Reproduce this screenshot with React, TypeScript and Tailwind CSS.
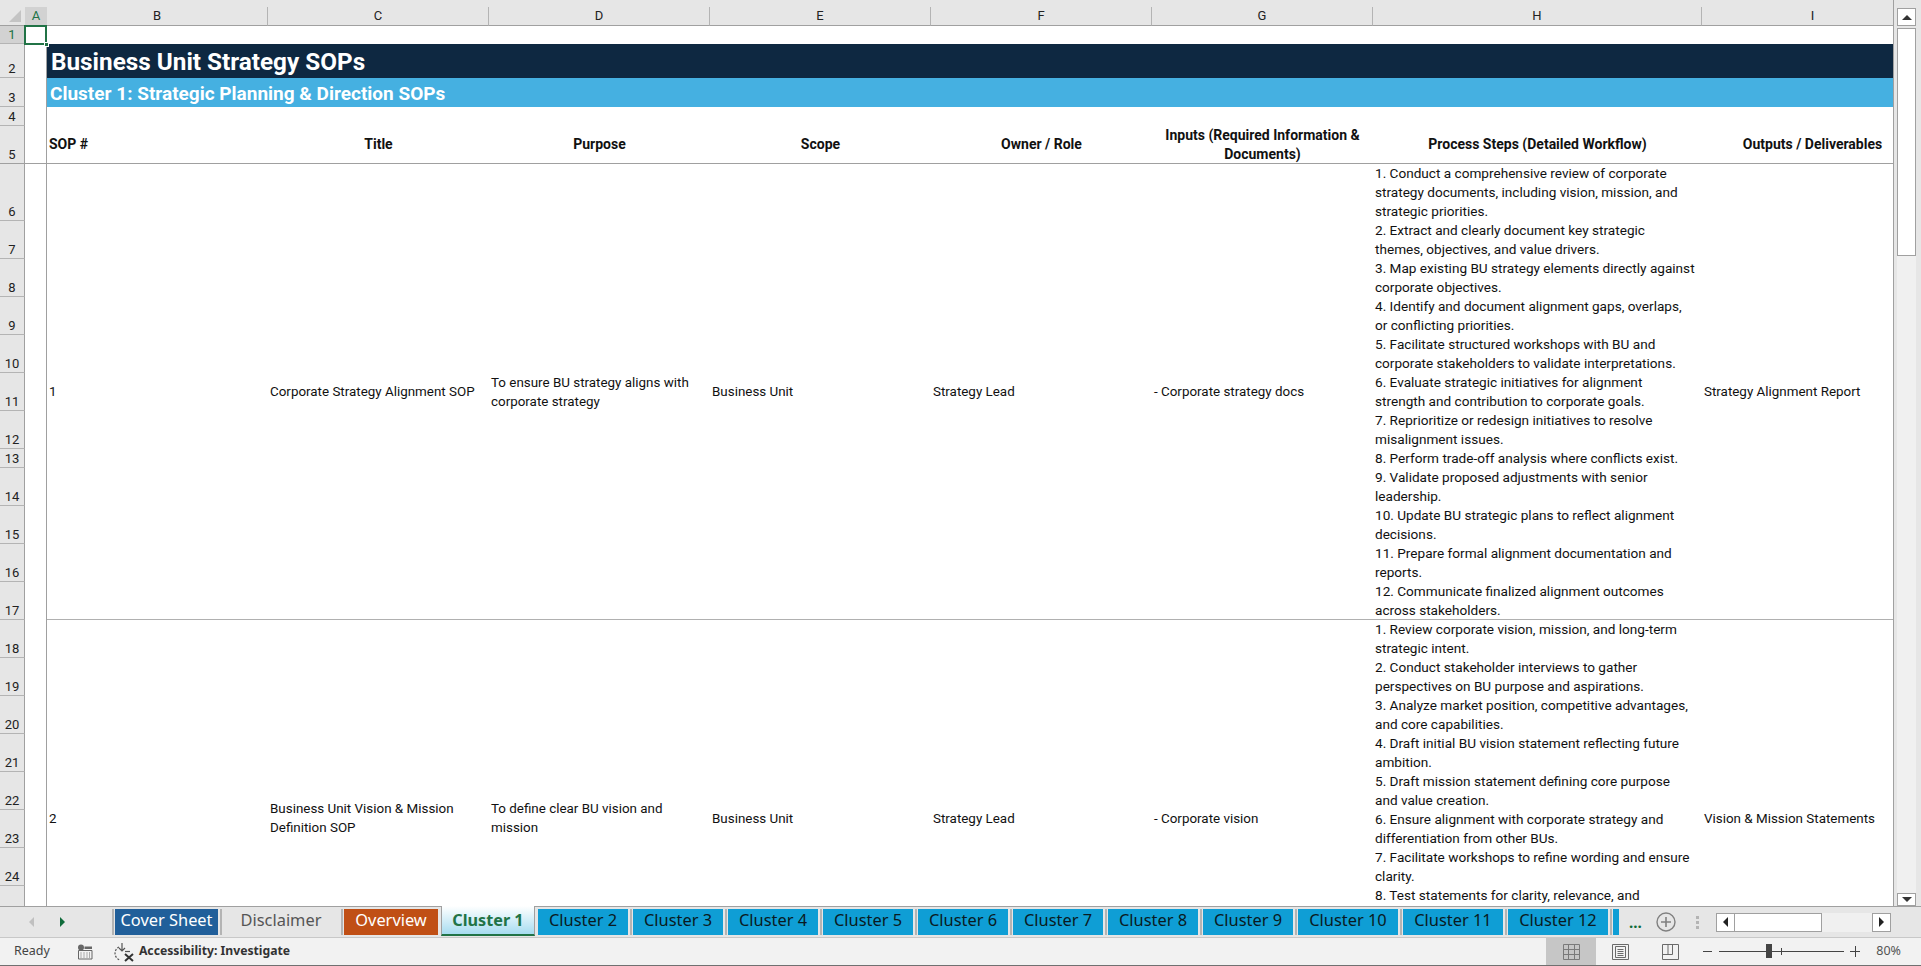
import { Fragment } from 'react';

const COLS = ['B', 'C', 'D', 'E', 'F', 'G', 'H', 'I'];

const BLOCK_1 = [
  ['1. Conduct a comprehensive review of corporate', 'strategy documents, including vision, mission, and', 'strategic priorities.'],
  ['2. Extract and clearly document key strategic', 'themes, objectives, and value drivers.'],
  ['3. Map existing BU strategy elements directly against', 'corporate objectives.'],
  ['4. Identify and document alignment gaps, overlaps,', 'or conflicting priorities.'],
  ['5. Facilitate structured workshops with BU and', 'corporate stakeholders to validate interpretations.'],
  ['6. Evaluate strategic initiatives for alignment', 'strength and contribution to corporate goals.'],
  ['7. Reprioritize or redesign initiatives to resolve', 'misalignment issues.'],
  ['8. Perform trade-off analysis where conflicts exist.'],
  ['9. Validate proposed adjustments with senior', 'leadership.'],
  ['10. Update BU strategic plans to reflect alignment', 'decisions.'],
  ['11. Prepare formal alignment documentation and', 'reports.'],
  ['12. Communicate finalized alignment outcomes', 'across stakeholders.'],
];

// rows below 25 sit under the tab bar, they only keep the merged cells centred
const BLOCK_2 = [
  ['1. Review corporate vision, mission, and long-term', 'strategic intent.'],
  ['2. Conduct stakeholder interviews to gather', 'perspectives on BU purpose and aspirations.'],
  ['3. Analyze market position, competitive advantages,', 'and core capabilities.'],
  ['4. Draft initial BU vision statement reflecting future', 'ambition.'],
  ['5. Draft mission statement defining core purpose', 'and value creation.'],
  ['6. Ensure alignment with corporate strategy and', 'differentiation from other BUs.'],
  ['7. Facilitate workshops to refine wording and ensure', 'clarity.'],
  ['8. Test statements for clarity, relevance, and'],
  [],
  [],
  [],
];

const TABS = [
  { label: 'Cover Sheet', cls: 'w-[103px] bg-[#215f9a] text-white' },
  { label: 'Disclaimer', cls: 'w-[116px] text-[#555555]' },
  { label: 'Overview', cls: 'w-[94px] bg-[#c04f15] text-white' },
];
const CLUSTERS = [
  { label: 'Cluster 2', cls: 'w-[90px]' },
  { label: 'Cluster 3', cls: 'w-[90px]' },
  { label: 'Cluster 4', cls: 'w-[90px]' },
  { label: 'Cluster 5', cls: 'w-[90px]' },
  { label: 'Cluster 6', cls: 'w-[90px]' },
  { label: 'Cluster 7', cls: 'w-[90px]' },
  { label: 'Cluster 8', cls: 'w-[90px]' },
  { label: 'Cluster 9', cls: 'w-[90px]' },
  { label: 'Cluster 10', cls: 'w-[100px]' },
  { label: 'Cluster 11', cls: 'w-[100px]' },
  { label: 'Cluster 12', cls: 'w-[100px]' },
];

function RowHead({ n, active }: { n: number; active?: boolean }) {
  return (
    <div className={`flex items-end justify-center border-r border-b border-r-[#a0a0a0] border-b-[#b4b4b4] pb-[1px] text-[13px] leading-[15px] ${active ? 'bg-[#d2d2d2] text-[#217346]' : 'bg-[#e6e6e6] text-[#222222]'}`}>
      {n < 25 ? n : ''}
    </div>
  );
}

function Block({ start, steps, cells, span, rowCls }: { start: number; steps: string[][]; cells: React.ReactNode[]; span: string; rowCls?: string }) {
  return (
    <>
      {steps.map((lines, i) => (
        <Fragment key={i}>
          <RowHead n={start + i} />
          {i === 0 && <div className={`${span} border-r border-[#a0a0a0]`} />}
          {i === 0 && cells.slice(0, 6).map((c, j) => (
            <div key={j} className={`${span} ${rowCls ?? ''}`}>
              <div className="flex h-full items-center px-[2px] text-[13.4px] leading-[19px] text-[#111111] whitespace-nowrap">
                <div>{c}</div>
              </div>
            </div>
          ))}
          <div className={`h-full px-[2px] text-[13.6px] leading-[19px] text-[#111111] whitespace-nowrap ${i === steps.length - 1 ? (rowCls ?? '') : ''}`}>
            {lines.map((l) => <div key={l}>{l}</div>)}
          </div>
          {i === 0 && (
            <div className={`${span} ${rowCls ?? ''}`}>
              <div className="flex h-full items-center px-[2px] text-[13.4px] leading-[19px] text-[#111111] whitespace-nowrap">
                <div>{cells[6]}</div>
              </div>
            </div>
          )}
        </Fragment>
      ))}
    </>
  );
}

function HeadCell({ children, left }: { children: React.ReactNode; left?: boolean }) {
  return (
    <div className={`flex items-center border-b border-[#a0a0a0] px-[2px] text-[14px] leading-[19px] font-bold text-[#111111] whitespace-nowrap ${left ? 'justify-start' : 'justify-center text-center'}`}>
      <div>{children}</div>
    </div>
  );
}

function Sep() {
  return <div className="mx-[1.5px] h-[26px] w-[2px] shrink-0 bg-[#b4b4b4]" />;
}

export default function App() {
  return (
    <div className="flex h-[966px] w-[1921px] flex-col overflow-hidden bg-white font-[Roboto,sans-serif]">
      <div className="flex h-[906px] shrink-0">
        {/* sheet */}
        <div className="h-[906px] w-[1894px] shrink-0 overflow-hidden border-r border-[#a0a0a0]">
          <div className="relative grid grid-cols-[25px_22px_221px_221px_221px_221px_221px_221px_329px_221px] grid-rows-[7px_19px_18px_34px_29px_19px_38px_57px_38px_38px_38px_38px_38px_38px_19px_38px_38px_38px_38px_38px_38px_38px_38px_38px_38px_38px_38px_38px_38px_16px]">
            <div className="col-span-10 bg-[#e6e6e6]" />

            {/* column headers */}
            <div className="relative border-b border-[#a0a0a0] bg-[#e6e6e6]">
              <div className="absolute right-[4px] bottom-[3px] h-0 w-0 border-b-[12px] border-l-[12px] border-b-[#c4c4c4] border-l-transparent" />
            </div>
            <div className="flex items-center justify-center border-b border-[#a0a0a0] bg-[#d2d2d2] text-[13px] text-[#217346]">A</div>
            {COLS.map((c, i) => (
              <div key={c} className={`flex items-center justify-center border-b border-[#a0a0a0] bg-[#e6e6e6] text-[13px] text-[#222222] ${i < COLS.length - 1 ? 'border-r border-r-[#b4b4b4]' : ''}`}>
                {c}
              </div>
            ))}

            {/* title rows */}
            <RowHead n={1} active />
            <div className="relative border-r border-[#a0a0a0]">
              <div className="absolute -top-px left-[-1px] right-[-1px] bottom-[-1px] border-2 border-[#217346]" />
              <div className="absolute right-[-3px] bottom-[-3px] h-[5px] w-[5px] border border-white bg-[#217346]" />
            </div>
            <div className="col-span-8" />

            <RowHead n={2} />
            <div className="border-r border-[#a0a0a0]" />
            <div className="col-span-8 flex items-center bg-[#0e2841] pt-[3px] pl-[4px] text-[24.3px] font-bold text-white">Business Unit Strategy SOPs</div>

            <RowHead n={3} />
            <div className="border-r border-[#a0a0a0]" />
            <div className="col-span-8 flex items-center bg-[#45b0e1] pt-[3px] pl-[3px] text-[19px] font-bold text-white">Cluster 1: Strategic Planning &amp; Direction SOPs</div>

            <RowHead n={4} />
            <div className="border-r border-[#a0a0a0]" />
            <div className="col-span-8" />

            {/* header row */}
            <div className="flex items-end justify-center border-r border-b border-r-[#a0a0a0] border-b-[#a0a0a0] bg-[#e6e6e6] pb-[1px] text-[13px] leading-[15px] text-[#222222]">5</div>
            <div className="border-r border-b border-[#a0a0a0]" />
            <HeadCell left>SOP #</HeadCell>
            <HeadCell>Title</HeadCell>
            <HeadCell>Purpose</HeadCell>
            <HeadCell>Scope</HeadCell>
            <HeadCell>Owner / Role</HeadCell>
            <HeadCell>
              <div>Inputs (Required Information &amp;</div>
              <div>Documents)</div>
            </HeadCell>
            <HeadCell>Process Steps (Detailed Workflow)</HeadCell>
            <HeadCell>Outputs / Deliverables</HeadCell>

            <Block
              start={6}
              steps={BLOCK_1}
              span="row-span-12"
              rowCls="border-b border-[#b0b0b0]"
              cells={[
                '1',
                'Corporate Strategy Alignment SOP',
                <><div>To ensure BU strategy aligns with</div><div>corporate strategy</div></>,
                'Business Unit',
                'Strategy Lead',
                '- Corporate strategy docs',
                'Strategy Alignment Report',
              ]}
            />
            <Block
              start={18}
              steps={BLOCK_2}
              span="row-span-11"
              cells={[
                '2',
                <><div>Business Unit Vision &amp; Mission</div><div>Definition SOP</div></>,
                <><div>To define clear BU vision and</div><div>mission</div></>,
                'Business Unit',
                'Strategy Lead',
                '- Corporate vision',
                'Vision & Mission Statements',
              ]}
            />
          </div>
        </div>

        {/* vertical scrollbar */}
        <div className="flex w-[27px] flex-col bg-[#e6e6e6] pt-[8px] pr-[5px] pl-[3px]">
          <div className="flex h-[18px] items-center justify-center border border-[#a0a0a0] bg-white">
            <div className="h-0 w-0 border-x-[5px] border-b-[5px] border-x-transparent border-b-[#333333]" />
          </div>
          <div className="mt-[2px] h-[228px] border border-[#a0a0a0] bg-white" />
          <div className="flex-1 bg-[#f0f0f0]" />
          <div className="flex h-[13px] items-center justify-center border border-[#a0a0a0] bg-white">
            <div className="h-0 w-0 border-x-[5px] border-t-[5px] border-x-transparent border-t-[#333333]" />
          </div>
        </div>
      </div>

      {/* sheet tabs */}
      <div className="flex h-[32px] shrink-0 border-y border-t-[#a0a0a0] border-b-[#c8c8c8] bg-[#e6e6e6] font-['Noto_Sans',sans-serif]">
        <div className="flex w-[110px] shrink-0 items-center pl-[29px]">
          <div className="h-0 w-0 border-y-[5px] border-r-[5px] border-y-transparent border-r-[#c0c0c0]" />
          <div className="ml-[26px] h-0 w-0 border-y-[5px] border-l-[5px] border-y-transparent border-l-[#0f6b3a]" />
        </div>
        <div className="flex items-start pt-[2px]">
          <Sep />
          {TABS.map((t, i) => (
            <Fragment key={t.label}>
              <div className={`flex h-[26px] shrink-0 items-center justify-center pb-[4px] text-[16.4px] ${t.cls}`}>{t.label}</div>
              {i < TABS.length - 1 && <Sep />}
            </Fragment>
          ))}
          <div className="ml-[3px] mt-[-3px] flex h-[30px] w-[94px] shrink-0 items-center justify-center border-x border-b-2 border-x-[#a0a0a0] border-b-[#217346] bg-gradient-to-b from-white to-[#a6dcf0] text-[16.2px] font-bold text-[#217346]">Cluster 1</div>
          <div className="w-[3px] shrink-0" />
          {CLUSTERS.map((t) => (
            <Fragment key={t.label}>
              <div className={`flex h-[26px] shrink-0 items-center justify-center bg-[#0f9ed5] pb-[4px] text-[16.4px] text-[#0a1a22] ${t.cls}`}>{t.label}</div>
              <Sep />
            </Fragment>
          ))}
          <div className="h-[26px] w-[6px] shrink-0 bg-[#0f9ed5]" />
        </div>
        <div className="ml-[10px] flex items-center text-[15px] font-bold text-[#0f6b3a]">…</div>
        <div className="ml-[14px] flex items-center">
          <svg width="20" height="20" viewBox="0 0 20 20" fill="none" stroke="#808080">
            <circle cx="10" cy="10" r="9" strokeWidth="1.4" />
            <path d="M10 5v10M5 10h10" strokeWidth="1.6" />
          </svg>
        </div>
        <div className="ml-[20px] flex flex-col justify-center gap-[2px]">
          <div className="h-[3px] w-[3px] bg-[#b4b4b4]" />
          <div className="h-[3px] w-[3px] bg-[#b4b4b4]" />
          <div className="h-[3px] w-[3px] bg-[#b4b4b4]" />
        </div>
        <div className="ml-[17px] flex items-center">
          <div className="flex h-[19px] w-[175px] bg-[#f0f0f0]">
            <div className="flex w-[19px] items-center justify-center border border-[#a0a0a0] bg-white">
              <div className="h-0 w-0 border-y-[5px] border-r-[5px] border-y-transparent border-r-[#222222]" />
            </div>
            <div className="w-[87px] border-y border-r border-[#a0a0a0] bg-white" />
            <div className="flex-1" />
            <div className="flex w-[19px] items-center justify-center border border-[#a0a0a0] bg-white">
              <div className="h-0 w-0 border-y-[5px] border-l-[5px] border-y-transparent border-l-[#222222]" />
            </div>
          </div>
        </div>
      </div>

      {/* status bar */}
      <div className="flex h-[28px] shrink-0 items-center border-b border-[#707070] bg-[#f2f2f2] font-['Noto_Sans',sans-serif] text-[#444444]">
        <div className="ml-[14px] text-[12.5px]">Ready</div>
        <svg className="ml-[27px]" width="16" height="16" viewBox="0 0 16 16" fill="none">
          <circle cx="4" cy="3.5" r="3" fill="#666666" />
          <path d="M7.5 2.5H15V5H7.5z" fill="#666666" />
          <path d="M1.5 6.5H15V15H1.5z" fill="#f2f2f2" stroke="#666666" />
          <path d="M3.5 9h1M6.5 9h1M9.5 9h1M12 9h1M3.5 11h1M6.5 11h1M9.5 11h1M12 11h1M3.5 13h1M6.5 13h1M9.5 13h1M12 13h1" stroke="#666666" />
        </svg>
        <svg className="ml-[20px]" width="22" height="20" viewBox="0 0 22 20" fill="none" stroke="#555555" strokeWidth="1.2">
          <path d="M6 5a7 7 0 0 0 1 13" strokeDasharray="2 1.4" />
          <path d="M9 1v8M6 6l3 3 3-3" />
          <path d="M12 9.5h5" />
          <path d="M12 12l8 7M20 12l-8 7" stroke="#333333" strokeWidth="2" />
        </svg>
        <div className="ml-[4px] text-[12.2px] font-bold text-[#333333]">Accessibility: Investigate</div>
        <div className="ml-auto flex h-full items-center">
          <div className="flex h-full w-[50px] items-center justify-center bg-[#c6c6c6]">
            <svg width="17" height="16" viewBox="0 0 17 16" fill="none" stroke="#7a7a7a">
              <path d="M.5.5h16v15H.5zM.5 5.5h16M.5 10.5h16M5.5.5v15M11.5.5v15" />
            </svg>
          </div>
          <svg className="ml-[16px]" width="17" height="16" viewBox="0 0 17 16" fill="none" stroke="#6a6a6a">
            <path d="M.5.5h16v15H.5zM3.5 2.5h10v11h-10z" />
            <path d="M5.5 5.5h6M5.5 7.5h6M5.5 9.5h6M5.5 11.5h6" />
          </svg>
          <svg className="ml-[33px]" width="17" height="16" viewBox="0 0 17 16" fill="none" stroke="#6a6a6a">
            <path d="M.5.5h16v15H.5zM.5 10.5h10V.5M6 .5v10" />
          </svg>
          <div className="ml-[24px] h-px w-[9px] bg-[#444444]" />
          <div className="relative ml-[7px] h-px w-[125px] bg-[#444444]">
            <div className="absolute top-[-7px] left-[47px] h-[14px] w-[6px] bg-[#444444]" />
            <div className="absolute top-[-3px] left-[62px] h-[7px] w-px bg-[#444444]" />
          </div>
          <div className="relative ml-[6px] h-px w-[10px] bg-[#444444]">
            <div className="absolute top-[-5px] left-[4.5px] h-[11px] w-px bg-[#444444]" />
          </div>
          <div className="mr-[20px] ml-[16px] text-[12.5px] text-[#555555]">80%</div>
        </div>
      </div>
    </div>
  );
}
